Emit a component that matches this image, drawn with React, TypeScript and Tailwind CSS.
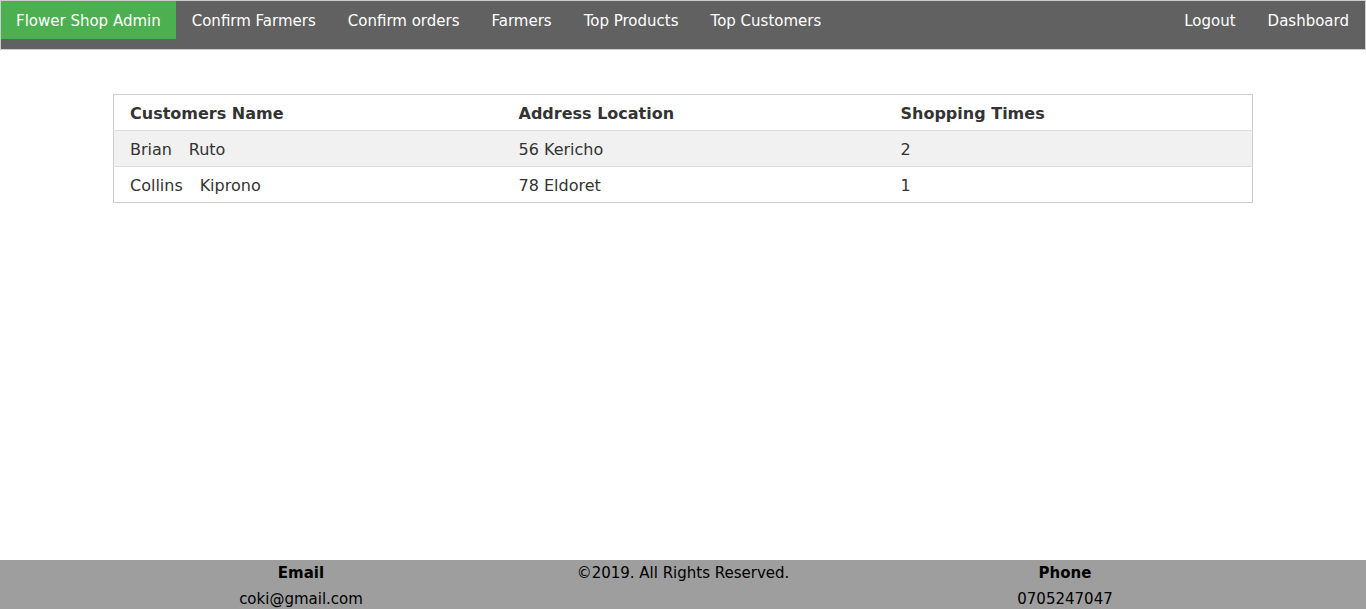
import React from "react";

const navLeft = ["Confirm Farmers", "Confirm orders", "Farmers", "Top Products", "Top Customers"];

const rows = [
  { name: "Brian\u00a0\u00a0\u00a0\u200aRuto", addr: "56 Kericho", times: "2" },
  { name: "Collins\u00a0\u00a0\u00a0\u200aKiprono", addr: "78 Eldoret", times: "1" },
];

export default function App() {
  return (
    <div className="w-[1366px] h-[609px] overflow-hidden bg-white text-[#333] font-['DejaVu_Sans','Verdana',sans-serif] text-[15px]">
      <nav className="h-[50px] border border-[#ccc] bg-[#616161] flex items-start text-white text-[15px]">
        <a className="h-[38px] pt-[2px] px-[15px] flex items-center bg-[#4caf50]">Flower Shop Admin</a>
        {navLeft.map((t) => (
          <a key={t} className="h-[38px] pt-[2px] px-4 flex items-center">{t}</a>
        ))}
        <div className="flex-1" />
        <a className="h-[38px] pt-[2px] px-4 flex items-center">Logout</a>
        <a className="h-[38px] pt-[2px] px-4 flex items-center">Dashboard</a>
      </nav>
      <main className="h-[510px] pt-[44px] px-[113px]">
        <table className="w-[1140px] border border-[#ccc] border-collapse text-[16px]">
          <thead>
            <tr className="h-[36px] border-b border-[#ddd]">
              <th className="w-[389px] text-left pl-4 pt-[2px] font-bold">Customers Name</th>
              <th className="w-[382px] text-left pl-4 pt-[2px] font-bold">Address Location</th>
              <th className="text-left pl-4 pt-[2px] font-bold">Shopping Times</th>
            </tr>
          </thead>
          <tbody>
            {rows.map((r, i) => (
              <tr key={i} className={`h-[36px] ${i === 0 ? "bg-[#f1f1f1] border-b border-[#ddd]" : "bg-white"}`}>
                <td className="pl-4 pt-[2px]">{r.name}</td>
                <td className="pl-4 pt-[2px]">{r.addr}</td>
                <td className="pl-4 pt-[2px]">{r.times}</td>
              </tr>
            ))}
          </tbody>
        </table>
      </main>
      <footer className="h-[60px] bg-[#9e9e9e] text-black px-[110px] grid grid-cols-3 text-center leading-[26px] pt-0">
        <div>
          <div className="font-bold">Email</div>
          <div>coki@gmail.com</div>
        </div>
        <div>©2019. All Rights Reserved.</div>
        <div>
          <div className="font-bold">Phone</div>
          <div>0705247047</div>
        </div>
      </footer>
    </div>
  );
}
